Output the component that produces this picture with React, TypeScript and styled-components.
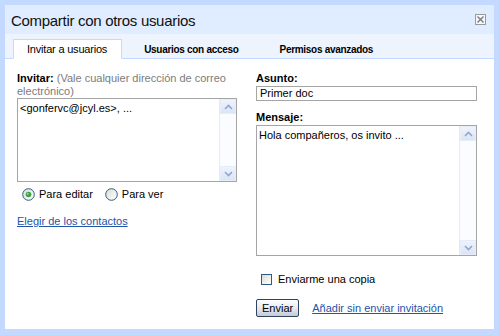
import React from "react";
import styled, { createGlobalStyle } from "styled-components";

const GlobalStyle = createGlobalStyle`
  html, body {
    margin: 0;
    padding: 0;
    background: #ffffff;
  }
  body {
    font-family: "Liberation Sans", Arial, sans-serif;
    font-size: 11px;
    color: #000;
  }
`;

function ChevronIcon({ up }: { up?: boolean }) {
  return (
    <svg width="9" height="6" viewBox="0 0 9 6">
      <path
        d={up ? "M1 5 L4.5 1.5 L8 5" : "M1 1 L4.5 4.5 L8 1"}
        fill="none"
        stroke="#8fa6cf"
        strokeWidth="1.6"
      />
    </svg>
  );
}

function CloseIcon() {
  return (
    <svg width="7" height="7" viewBox="0 0 7 7">
      <path d="M0.5 0.5 L6.5 6.5 M6.5 0.5 L0.5 6.5" stroke="#7a7a7a" strokeWidth="1.4" />
    </svg>
  );
}

function RadioMark({ checked }: { checked?: boolean }) {
  return (
    <svg width="13" height="13" viewBox="0 0 13 13">
      <defs>
        <linearGradient id="radioFill" x1="0" y1="0" x2="1" y2="1">
          <stop offset="0" stopColor="#dcdcd4" />
          <stop offset="1" stopColor="#ffffff" />
        </linearGradient>
      </defs>
      <circle cx="6.5" cy="6.5" r="5.8" fill="url(#radioFill)" stroke="#2f5a86" strokeWidth="1" />
      {checked && <circle cx="6.5" cy="6.5" r="2.8" fill="#3aa545" />}
      {checked && <circle cx="5.8" cy="5.8" r="1" fill="#8fdc8a" />}
    </svg>
  );
}

function Scrollbar() {
  return (
    <ScrollTrack>
      <ScrollButton>
        <ChevronIcon up />
      </ScrollButton>
      <ScrollFill />
      <ScrollButton>
        <ChevronIcon />
      </ScrollButton>
    </ScrollTrack>
  );
}

function App() {
  return (
    <>
      <GlobalStyle />
      <Dialog>
        <TitleBar>
          <Title>Compartir con otros usuarios</Title>
          <CloseBox>
            <CloseIcon />
          </CloseBox>
        </TitleBar>

        <TabBar>
          <Tab $active>Invitar a usuarios</Tab>
          <Tab>Usuarios con acceso</Tab>
          <Tab>Permisos avanzados</Tab>
        </TabBar>

        <Body>
          <Column>
            <Label>
              <strong>Invitar:</strong> <Hint>(Vale cualquier dirección de correo electrónico)</Hint>
            </Label>
            <TextBox $height={84} $gap={0}>
              <TextContent>&lt;gonfervc@jcyl.es&gt;, ...</TextContent>
              <Scrollbar />
            </TextBox>
            <RadioRow>
              <RadioOption>
                <RadioMark checked />
                Para editar
              </RadioOption>
              <RadioOption>
                <RadioMark />
                Para ver
              </RadioOption>
            </RadioRow>
            <LinkText $top={13}>Elegir de los contactos</LinkText>
          </Column>

          <Column>
            <Label>
              <strong>Asunto:</strong>
            </Label>
            <InputBox>Primer doc</InputBox>
            <Label $top={10}>
              <strong>Mensaje:</strong>
            </Label>
            <TextBox $height={131} $gap={1}>
              <TextContent>Hola compañeros, os invito ...</TextContent>
              <Scrollbar />
            </TextBox>
            <CheckRow>
              <CheckBox />
              Enviarme una copia
            </CheckRow>
            <ActionRow>
              <SendButton>Enviar</SendButton>
              <LinkText>Añadir sin enviar invitación</LinkText>
            </ActionRow>
          </Column>
        </Body>
      </Dialog>
    </>
  );
}

export default App;

const Dialog = styled.div`
  width: 499px;
  height: 335px;
  box-sizing: border-box;
  background: #c3d9ff;
  padding: 5px 5px 6px 5px;
  display: flex;
  flex-direction: column;
`;

const TitleBar = styled.div`
  height: 29px;
  background: #e0ecff;
  display: flex;
  align-items: center;
  justify-content: space-between;
  padding: 0 8px 0 6px;
`;

const Title = styled.div`
  font-size: 15px;
  letter-spacing: -0.3px;
  color: #111;
  padding-top: 1px;
`;

const CloseBox = styled.div`
  width: 11px;
  height: 11px;
  border: 1px solid #9a9a9a;
  box-sizing: border-box;
  display: flex;
  align-items: center;
  justify-content: center;
  background: #f4f7fd;
`;

const TabBar = styled.div`
  height: 25px;
  box-sizing: border-box;
  background: #eef4fe;
  border-bottom: 1px solid #c3d9ff;
  display: flex;
  align-items: flex-end;
  padding-left: 8px;
`;

const Tab = styled.div<{ $active?: boolean }>`
  height: 20px;
  box-sizing: border-box;
  margin-bottom: -1px;
  margin-right: 3px;
  display: flex;
  align-items: center;
  white-space: nowrap;
  font-size: ${(p) => (p.$active ? "11px" : "10px")};
  font-weight: ${(p) => (p.$active ? "normal" : "bold")};
  letter-spacing: ${(p) => (p.$active ? "-0.2px" : "-0.3px")};
  padding: ${(p) => (p.$active ? "0 14px 0 13px" : "0 18px")};
  background: ${(p) => (p.$active ? "#ffffff" : "transparent")};
  border: 1px solid ${(p) => (p.$active ? "#c3d9ff" : "transparent")};
  border-bottom: 1px solid ${(p) => (p.$active ? "#ffffff" : "transparent")};
`;

const Body = styled.div`
  flex: 1;
  background: #ffffff;
  display: grid;
  grid-template-columns: 220px 221px;
  column-gap: 19px;
  padding: 13px 17px 0 12px;
  align-items: start;
`;

const Column = styled.div`
  display: flex;
  flex-direction: column;
  align-items: flex-start;
`;

const Label = styled.div<{ $top?: number }>`
  line-height: 13px;
  margin-top: ${(p) => p.$top ?? 0}px;
  strong {
    font-weight: bold;
  }
`;

const Hint = styled.span`
  color: #7b7b7b;
`;

const TextBox = styled.div<{ $height: number; $gap: number }>`
  width: 100%;
  height: ${(p) => p.$height}px;
  box-sizing: border-box;
  border: 1px solid #a5a5a5;
  display: flex;
  margin-top: ${(p) => p.$gap}px;
`;

const TextContent = styled.div`
  flex: 1;
  padding: 3px 2px;
  line-height: 13px;
`;

const ScrollTrack = styled.div`
  width: 16px;
  display: flex;
  flex-direction: column;
  border-left: 1px solid #e3ebf8;
  background: #fafcff;
`;

const ScrollButton = styled.div`
  height: 15px;
  display: flex;
  align-items: center;
  justify-content: center;
  background: linear-gradient(#eef3fc, #dbe5f6);
  border: 1px solid #e6edf9;
  box-sizing: border-box;
`;

const ScrollFill = styled.div`
  flex: 1;
`;

const RadioRow = styled.div`
  display: flex;
  gap: 12px;
  margin: 4px 0 0 5px;
  height: 16px;
  align-items: center;
`;

const RadioOption = styled.label`
  display: flex;
  align-items: center;
  gap: 4px;
`;

const LinkText = styled.span<{ $top?: number }>`
  color: #2354aa;
  text-decoration: underline;
  line-height: 13px;
  margin-top: ${(p) => p.$top ?? 0}px;
  white-space: nowrap;
`;

const InputBox = styled.div`
  width: 100%;
  height: 15px;
  box-sizing: border-box;
  border: 1px solid #a5a5a5;
  padding: 0 3px;
  line-height: 13px;
  margin-top: 1px;
`;

const CheckRow = styled.label`
  display: flex;
  align-items: center;
  gap: 6px;
  margin: 15px 0 0 5px;
  height: 16px;
`;

const CheckBox = styled.span`
  width: 11px;
  height: 11px;
  box-sizing: border-box;
  border: 1px solid #2f5a86;
  background: linear-gradient(135deg, #dcdcd4, #ffffff);
`;

const ActionRow = styled.div`
  display: flex;
  align-items: center;
  gap: 13px;
  margin-top: 12px;
`;

const SendButton = styled.button`
  height: 18px;
  box-sizing: border-box;
  padding: 0 5px;
  font-family: inherit;
  font-size: 11px;
  color: #000;
  border: 1px solid #31445e;
  border-radius: 2px;
  background: linear-gradient(#ffffff, #e4e8ef 55%, #c4cbd7);
  line-height: 14px;
`;
